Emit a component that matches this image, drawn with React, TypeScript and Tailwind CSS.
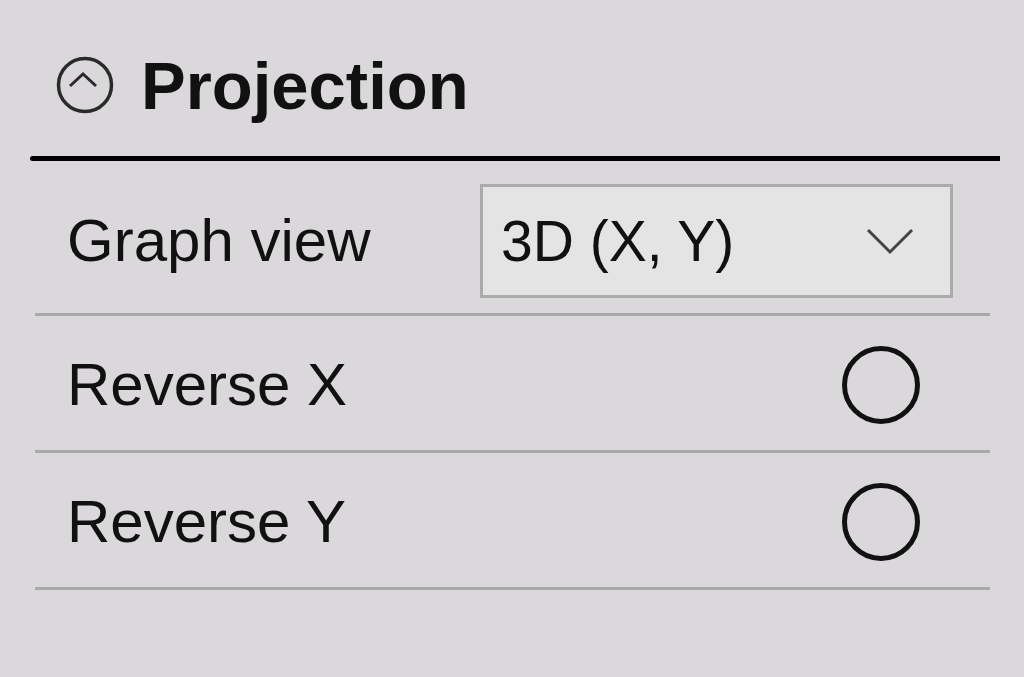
import { useState } from "react";

const font = { fontFamily: '"Liberation Sans", Arial, sans-serif' };

function CollapseIcon() {
  return (
    <svg width="58" height="58" viewBox="0 0 58 58" className="shrink-0">
      <circle cx="29" cy="29" r="26.5" fill="none" stroke="#2a2a2a" strokeWidth="3.5" />
      <path d="M14 30 L27 18 L40 30" fill="none" stroke="#2a2a2a" strokeWidth="3" />
    </svg>
  );
}

function Radio({ checked, onClick }: { checked: boolean; onClick: () => void }) {
  return (
    <button
      onClick={onClick}
      className="w-[78px] h-[78px] rounded-full border-[5px] border-[#111] flex items-center justify-center"
    >
      {checked && <span className="w-[40px] h-[40px] rounded-full bg-[#111]" />}
    </button>
  );
}

export default function App() {
  const [reverseX, setReverseX] = useState(false);
  const [reverseY, setReverseY] = useState(false);

  return (
    <div className="w-[1024px] h-[677px] bg-[#dad8db] pt-[56px] pl-[30px] text-[#111]" style={font}>
      <div className="w-[970px]">
        <div className="flex items-center gap-[27px] pl-[26px] h-[58px]">
          <CollapseIcon />
          <span className="text-[67px] font-bold leading-none">Projection</span>
        </div>

        <div className="mt-[42px] h-[5px] bg-black rounded-l-full" />

        <div className="ml-[5px] w-[955px]">
          <div className="h-[155px] pt-[8px] flex items-center border-b-[3px] border-[#a9a9a9] pl-[32px] pr-[37px]">
            <span className="text-[60px] leading-none">Graph view</span>
            <button className="ml-auto w-[473px] h-[114px] bg-[#e4e4e4] border-[3px] border-[#ababab] flex items-center pl-[18px] pr-[36px]">
              <span className="text-[57px] leading-none">3D (X, Y)</span>
              <svg width="48" height="28" viewBox="0 0 48 28" className="ml-auto">
                <path d="M2 3 L24 25 L46 3" fill="none" stroke="#444" strokeWidth="3" />
              </svg>
            </button>
          </div>

          <div className="h-[137px] pt-[4px] flex items-center border-b-[3px] border-[#a9a9a9] pl-[32px] pr-[70px]">
            <span className="text-[60px] leading-none">Reverse X</span>
            <div className="ml-auto">
              <Radio checked={reverseX} onClick={() => setReverseX(!reverseX)} />
            </div>
          </div>

          <div className="h-[137px] pt-[4px] flex items-center border-b-[3px] border-[#a9a9a9] pl-[32px] pr-[70px]">
            <span className="text-[60px] leading-none">Reverse Y</span>
            <div className="ml-auto">
              <Radio checked={reverseY} onClick={() => setReverseY(!reverseY)} />
            </div>
          </div>
        </div>
      </div>
    </div>
  );
}
